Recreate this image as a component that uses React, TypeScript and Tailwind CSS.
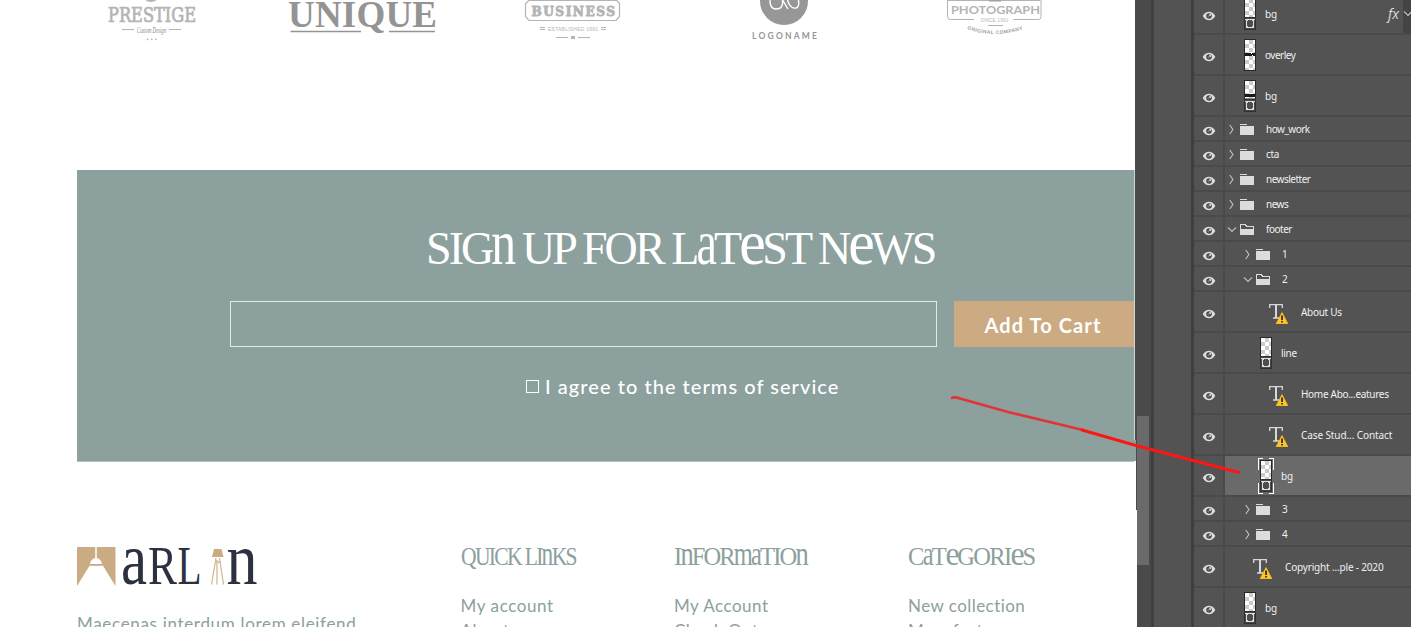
import React from "react";

/* Lowercase letters drawn at capital height, as in a unicase display face. */
function Unicase({ text }: { text: string }) {
  return (
    <>
      {text.split("").map((c, i) =>
        /[a-z]/.test(c) ? (
          <span
            key={i}
            className={`inline-block origin-[50%_83.75%] leading-none ${c === "e" ? "mx-[0.06em] scale-x-[1.3] scale-y-[1.38]" : c === "n" ? "mx-[0.02em] scale-x-[1.08] scale-y-[1.4]" : "scale-y-[1.4]"}`}
          >
            {c}
          </span>
        ) : (
          <React.Fragment key={i}>{c}</React.Fragment>
        )
      )}
    </>
  );
}

function Eye() {
  return (
    <svg width="14" height="10" viewBox="0 0 14 10" className="block">
      <path d="M.7 5C2.3 2.2 4.500 .8 7 .8s4.700 1.400 6.300 4.200C11.700 7.800 9.500 9.200 7 9.200S2.300 7.800.7 5Z" fill="#dedede" />
      <circle cx="7" cy="5" r="2.800" fill="#484848" />
      <circle cx="6.400" cy="5.400" r="1.100" fill="#777" />
      <circle cx="8.100" cy="4" r=".9" fill="#f4f4f4" />
    </svg>
  );
}

function Chevron({ open }: { open?: boolean }) {
  return (
    <svg width="10" height="11" viewBox="0 0 10 11" className="block shrink-0">
      <path d={open ? "M1 3.300 5 7.500l4-4.200" : "M2.800 1 5.900 5.500 2.800 10"} fill="none" stroke="#c4c4c4" strokeWidth="1.100" />
    </svg>
  );
}

function Folder({ open }: { open?: boolean }) {
  return (
    <svg width="14" height="11" viewBox="0 0 14 11" className="block shrink-0" shapeRendering="crispEdges">
      {open ? (
        <>
          <path d="M.5 10V.5h5l1 2h7V10" fill="none" stroke="#dcdcdc" />
          <path d="M0 5h14v6H0Z" fill="#dcdcdc" />
        </>
      ) : (
        <path d="M0 0h7v1H0ZM0 2h14v9H0Z" fill="#dcdcdc" />
      )}
    </svg>
  );
}

type Kind = "shape" | "overlay" | "band" | "selected";

function Thumb({ kind }: { kind: Kind }) {
  const cells = [];
  for (let r = 0; r < 8; r++)
    for (let c = 0; c < 3; c++)
      if ((r + c) % 2 === 1) cells.push(<rect key={`${r}-${c}`} x={1 + c * 4} y={1 + r * 4} width={c === 2 ? 2 : 4} height={r === 7 ? 2 : 4} fill="#cbcbcb" />);
  return (
    <svg width="16" height="36" viewBox="-2 -2 16 36" className="block shrink-0" shapeRendering="crispEdges">
      <rect width="12" height="32" fill="#282828" />
      <rect x="1" y="1" width="10" height="30" fill="#fff" />
      {cells}
      {kind === "overlay" && <path d="M1 14h6v1h1v-1h3v3H9v-1H8v1H1Z" fill="#15191e" />}
      {kind === "band" && <path d="M1 14h10v3H1Z" fill="#15191e" />}
      {kind !== "overlay" && (
        <>
          {kind === "band" ? <path d="M1 18h10v1H1Z" fill="#888" /> : null}
          <rect y="19" width="12" height="13" fill="#303030" />
          <rect x="1" y="20" width="10" height="11" fill="#4a4a4a" />
          <path d="M3.500 21.500h5v1h1v6h-1v1h-5v-1h-1v-6h1Z" fill="#4d4d4d" stroke="#dedede" />
          <path d="M1 21h2v1H1zM9 21h2v1H9zM2 29h1v1H2zM9 29h1v1H9z" fill="#d8d8d8" />
        </>
      )}
      {kind === "selected" && <path d="M3-1.500h-4.500V10M9-1.500h4.500V10M3 33.500h-4.500V23M9 33.500h4.500V23" fill="none" stroke="#fff" />}
    </svg>
  );
}

function TextIcon() {
  return (
    <svg width="20" height="20" viewBox="0 0 20 20" className="block shrink-0">
      <path d="M.7 4V.7h12.600V4M4 14h6" fill="none" stroke="#d8d8d8" strokeWidth="1.300" />
      <path d="M6 1h2v13H6Z" fill="#d8d8d8" />
      <path d="M13 8.600 18.800 19.700H7.200Z" fill="#ffc425" stroke="#ffc425" strokeWidth=".8" strokeLinejoin="round" />
      <path d="M12.200 11.500h1.700v4.500h-1.700ZM12.200 17h1.700v1.600h-1.700Z" fill="#2c2510" />
    </svg>
  );
}

type Row = {
  label: string;
  kind: "folder" | "open" | "text" | Kind;
  pad: string;
  track: string;
  fx?: boolean;
};

const L0 = "pl-[17px]";
const L1 = "pl-[33px]";
const NORMAL = "tracking-[-0.1px]";
const TIGHT = "tracking-[-0.5px]";
const SNUG = "tracking-[-0.3px]";

const rows: Row[] = [
  { label: "bg", kind: "shape", pad: L0, track: NORMAL, fx: true },
  { label: "overley", kind: "overlay", pad: L0, track: TIGHT },
  { label: "bg", kind: "band", pad: L0, track: NORMAL },
  { label: "how_work", kind: "folder", pad: "pl-[2px]", track: TIGHT },
  { label: "cta", kind: "folder", pad: "pl-[2px]", track: SNUG },
  { label: "newsletter", kind: "folder", pad: "pl-[2px]", track: TIGHT },
  { label: "news", kind: "folder", pad: "pl-[2px]", track: TIGHT },
  { label: "footer", kind: "open", pad: "pl-[2px]", track: TIGHT },
  { label: "1", kind: "folder", pad: "pl-[18px]", track: NORMAL },
  { label: "2", kind: "open", pad: "pl-[18px]", track: NORMAL },
  { label: "About Us", kind: "text", pad: "pl-[44px]", track: SNUG },
  { label: "line", kind: "shape", pad: L1, track: SNUG },
  { label: "Home Abo...eatures", kind: "text", pad: "pl-[44px]", track: SNUG },
  { label: "Case Stud... Contact", kind: "text", pad: "pl-[44px]", track: NORMAL },
  { label: "bg", kind: "selected", pad: L1, track: NORMAL },
  { label: "3", kind: "folder", pad: "pl-[18px]", track: NORMAL },
  { label: "4", kind: "folder", pad: "pl-[18px]", track: NORMAL },
  { label: "Copyright ...ple - 2020", kind: "text", pad: "pl-[28px]", track: "tracking-[-0.17px]" },
  { label: "bg", kind: "shape", pad: L0, track: NORMAL },
];

function LayerRow({ row }: { row: Row }) {
  const group = row.kind === "folder" || row.kind === "open";
  return (
    <div className={`flex shrink-0 border-b-2 border-[#4a4a4a] ${group ? "h-[25px]" : "h-[41px]"}`}>
      <div className={`flex w-[31px] shrink-0 items-center justify-center border-r-2 border-[#4a4a4a] pl-[1px] ${group ? "pt-[5px]" : "pt-[4px]"}`}>
        <Eye />
      </div>
      <div className={`flex min-w-0 grow items-center ${row.pad} ${row.kind === "selected" ? "bg-[#6a6a6a]" : ""}`}>
        {group ? (
          <>
            <div className="pt-[2px]">
              <Chevron open={row.kind === "open"} />
            </div>
            <div className="mr-3 ml-[3px] pt-[2px]">
              <Folder open={row.kind === "open"} />
            </div>
          </>
        ) : row.kind === "text" ? (
          <div className="mr-3 pt-1">
            <TextIcon />
          </div>
        ) : (
          <div className="mr-[7px] pt-[1px]">
            <Thumb kind={row.kind as Kind} />
          </div>
        )}
        <span className={`grow pt-[1px] text-[10px] leading-4 whitespace-nowrap text-[#f0f0f0] ${row.track}`}>{row.label}</span>
        {row.fx && (
          <>
            <span className="mr-1 font-['Open_Sans'] text-[14px] leading-4 text-[#dcdcdc] italic">fx</span>
            <span className="flex h-full w-2 items-center overflow-hidden bg-[#444]">
              <Chevron open />
            </span>
          </>
        )}
      </div>
    </div>
  );
}

function BrandLogos() {
  return (
    <svg width="1135" height="60" viewBox="0 0 1135 60" className="block">
      <g fill="#b4b4b4">
        <circle cx="151" cy="-7" r="9" />
        <text x="108" y="22" fontSize="20" textLength="88" lengthAdjust="spacingAndGlyphs" fontFamily="DejaVu Serif Condensed, DejaVu Serif, serif" stroke="#b4b4b4" strokeWidth=".7">PRESTIGE</text>
        <path d="M122 29.500h12M169 29.500h12" stroke="#b4b4b4" />
        <text x="137" y="33" fontSize="8" fontStyle="italic" textLength="29" lengthAdjust="spacingAndGlyphs" fontFamily="Liberation Serif, serif" fill="#888">Custom Design</text>
        <circle cx="147.500" cy="39.300" r=".9" />
        <circle cx="151.700" cy="39.300" r=".9" />
        <circle cx="156" cy="39.300" r=".9" />
      </g>
      <g fill="#949494">
        <text x="288" y="27" fontSize="37" fontWeight="700" textLength="149" lengthAdjust="spacing" fontFamily="Liberation Serif, serif">UNIQUE</text>
        <path d="M290.500 31.500H361M389 31.500h46" stroke="#949494" strokeWidth="1.500" />
      </g>
      <g fill="#b4b4b4">
        <path d="M529 .5h88l2.500 3v13l-3.500 4h-87l-3.500-4v-13Z" fill="none" stroke="#b4b4b4" strokeWidth="1.200" />
        <text x="531.500" y="16" fontSize="13.500" fontWeight="700" textLength="83.500" lengthAdjust="spacing" fontFamily="DejaVu Serif Condensed, DejaVu Serif, serif" stroke="#b4b4b4" strokeWidth=".8">BUSINESS</text>
        <path d="M540 27.500h5M540 29.500h5M601 27.500h5M601 29.500h5M556 37.500h12M578 37.500h12" stroke="#b4b4b4" />
        <text x="548" y="30.500" fontSize="5" textLength="50" fontFamily="Liberation Sans, sans-serif">ESTABLISHED 1991</text>
        <rect x="571" y="36" width="4" height="3" />
      </g>
      <g fill="#979797">
        <circle cx="784" cy="1" r="24" />
        <path d="M771-6c-2 8-1 15 5 15 7 0 8-6 5-14M779-6l9 15M786-6c2 9 4 15 10 14 4-1 3-8 1-13" fill="none" stroke="#fff" strokeWidth="1.400" />
        <text x="752" y="39.300" fontSize="8.500" fontWeight="700" textLength="65" fontFamily="Lato, sans-serif">LOGONAME</text>
      </g>
      <g fill="#b4b4b4">
        <path d="M947.500 0v16.500q0 3 3 3H974M1013.500 19.500h25q2.500 0 2.500-3V0M988 25.500h15M947.500 .5h93" fill="none" stroke="#b4b4b4" />
        <path d="M989 0h12v1.500h-12Z" fill="#a0a0a0" />
        <text x="951" y="14" fontSize="12" fontWeight="700" textLength="89" lengthAdjust="spacingAndGlyphs" fontFamily="Lato, sans-serif">PHOTOGRAPH</text>
        <text x="979" y="21.500" fontSize="4.500" textLength="31" fontFamily="Liberation Sans, sans-serif">·SINCE 1991·</text>
        <path id="arc" d="M967 29q28 10 57 0" fill="none" />
        <text fontSize="5" fontWeight="700" fontFamily="Liberation Sans, sans-serif" fill="#a0a0a0">
          <textPath href="#arc" textLength="57">ORIGINAL COMPANY</textPath>
        </text>
      </g>
    </svg>
  );
}

function ArlinLogo() {
  return (
    <svg width="184" height="46" viewBox="0 0 184 46" className="block overflow-visible">
      <path d="M0 2h38.500v39L25.500 20H13L0 41Z" fill="#cbab83" />
      <path d="M19 2v12" stroke="#fff" strokeWidth="1.500" />
      <path d="M13 19c.5-4 3.500-6 6-6s5.500 2 6 6ZM14 21h11l13.500 21H0Z" fill="#fff" />
      <path d="M13 20.200h12.500" stroke="#cbab83" strokeWidth="1.200" />
      <g fill="#2b3140" fontFamily="Liberation Serif, serif">
        <text x="44" y="38.500" fontSize="75" textLength="26" lengthAdjust="spacingAndGlyphs">a</text>
        <text x="71" y="38.500" fontSize="54" textLength="29" lengthAdjust="spacingAndGlyphs">R</text>
        <text x="100.500" y="38.500" fontSize="54" textLength="24" lengthAdjust="spacingAndGlyphs">L</text>
        <text x="149.500" y="38.500" fontSize="75" textLength="31" lengthAdjust="spacingAndGlyphs">n</text>
      </g>
      <path d="M137 4h7.500l2 8H135Z" fill="#cbab83" />
      <path d="M139 13l-4.500 26.500M142.500 13l4 26.500M140 15v24.500M138 17h6" fill="none" stroke="#d3b898" strokeWidth="1.300" />
    </svg>
  );
}

function FooterColumn({ title, links, className, titleTrack, linkTracks }: { title: string; links: string[]; className: string; titleTrack: string; linkTracks: string }) {
  return (
    <div className={`shrink-0 whitespace-nowrap text-[#8ca09e] ${className}`}>
      <h3 className={`h-[25px] font-['Liberation_Serif'] text-[24.5px] leading-[25px] ${titleTrack}`}>
        <Unicase text={title} />
      </h3>
      <ul className={`mt-[24px] font-['Lato'] text-[17px] leading-[25px] ${linkTracks}`}>
        {links.map((l) => (
          <li key={l}>{l}</li>
        ))}
      </ul>
    </div>
  );
}

export default function App() {
  return (
    <div className="relative flex h-[627px] w-[1411px] overflow-hidden bg-white">
      <main className="flex h-full w-[1135px] shrink-0 flex-col overflow-hidden bg-white">
        <div className="h-[170px] shrink-0">
          <BrandLogos />
        </div>
        <section className="ml-[77px] flex h-[291px] w-[1058px] shrink-0 flex-col border-r border-[#cbd5d4] bg-[#8ca09e] text-white shadow-[0_1px_0_#b2c0be]">
          <h2 className="mt-[56px] ml-[349px] h-[46px] font-['Liberation_Serif'] text-[46px] leading-[46px] tracking-[-2.9px] whitespace-nowrap">
            <Unicase text="SIGn UP FOR LaTeST NeWS" />
          </h2>
          <div className="mt-[29px] ml-[153px] flex h-[46px] gap-[17px]">
            <div className="w-[707px] shrink-0 border border-[#e3e8e8]" />
            <button className="grow bg-[#ccab83] pt-[1px] pr-[2px] font-['Lato'] text-[20px] font-bold tracking-[1.1px] text-white">Add To Cart</button>
          </div>
          <label className="mt-[26px] ml-[449px] flex h-[26px] items-center gap-[6px]">
            <span className="h-[13px] w-[13px] border border-white" />
            <span className="font-['Lato'] text-[20px] leading-[26px] font-medium tracking-[1.04px] whitespace-nowrap">I agree to the terms of service</span>
          </label>
        </section>
        <footer className="flex pt-[83px] pl-[77px]">
          <div className="w-[383.500px] shrink-0">
            <div className="pt-[1px]">
              <ArlinLogo />
            </div>
            <p className="mt-[20px] font-['Lato'] text-[17px] leading-[26px] tracking-[0.68px] whitespace-nowrap text-[#8ca09e]">Maecenas interdum lorem eleifend</p>
          </div>
          <FooterColumn className="w-[213.500px]" title="QUICK LInKS" links={["My account", "About us"]} titleTrack="w-[130px] origin-left scale-x-[0.88] tracking-[-1.9px]" linkTracks="tracking-[0.6px]" />
          <FooterColumn className="w-[234px]" title="InFORmaTIOn" links={["My Account", "Check Out"]} titleTrack="tracking-[-1.85px]" linkTracks="tracking-[0.5px]" />
          <FooterColumn className="w-[200px]" title="CaTeGORIeS" links={["New collection", "Manufacturers"]} titleTrack="tracking-[-1.7px]" linkTracks="tracking-[0.45px]" />
        </footer>
      </main>

      <div className="h-full w-4 shrink-0 bg-[#4a4a4a] pt-[416px] pl-[2px]">
        <div className="h-[149px] w-3 bg-[#6a6a6a]" />
      </div>
      <div className="h-full w-[43px] shrink-0 border-x-[3px] border-[#3f3f3f] bg-[#535353]" />

      <aside className="flex h-full w-[217px] shrink-0 flex-col overflow-hidden bg-[#535353] font-['Noto_Sans']">
        <div className="-mt-[6px] flex flex-col">
          {rows.map((row, i) => (
            <LayerRow key={i} row={row} />
          ))}
        </div>
      </aside>

      <div className="absolute top-[440px] left-[1134px] flex h-[187px] w-[3px] flex-col">
        <div className="h-[21px] w-[2px] bg-[#8ca09e]" />
        <div className="h-[49px] w-[2px] bg-white" />
        <div className="grow bg-white" />
      </div>
      <svg className="pointer-events-none absolute top-[390px] left-[945px]" width="300" height="90" viewBox="945 390 300 90">
        <path d="M952 398q2-1.500 8 .5l48 13.500 75 18" fill="none" stroke="#e03436" strokeWidth="2.600" strokeLinecap="round" />
        <path d="M1082 430l54 15.500 103 27" fill="none" stroke="#fc1717" strokeWidth="3" strokeLinecap="round" />
      </svg>
    </div>
  );
}
